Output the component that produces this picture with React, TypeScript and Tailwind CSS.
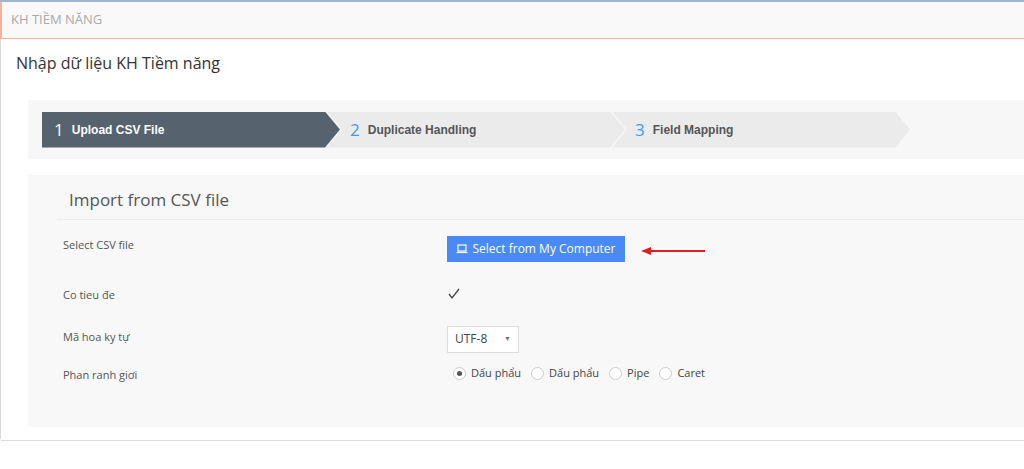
export default function App() {
  const f = { fontFamily: '"Open Sans", "Liberation Sans", sans-serif' }
  const steps = [
    { n: '1', label: 'Upload CSV File', active: true },
    { n: '2', label: 'Duplicate Handling', active: false },
    { n: '3', label: 'Field Mapping', active: false },
  ]
  return (
    <div className="w-[1024px] h-[469px] bg-white overflow-hidden border-t-2 border-[#9fb6cf]" style={f}>
      {/* Header */}
      <div className="h-[37px] bg-[#f9f9f9] border-l-2 border-[#f4b39a] border-b border-[#e6e6e6] flex items-center pl-[9px]">
        <span className="text-[13px] text-[#a9a9a9]">KH TIỀM NĂNG</span>
      </div>

      <div className="border-l border-[#d9d9d9] h-[400px]">
        <div className="pl-[15px] pt-[12px] text-[16px] text-[#333]">Nhập dữ liệu KH Tiềm năng</div>

        {/* Steps */}
        <div className="ml-[27px] mt-[25px] h-[59px] bg-[#f7f7f7] flex items-center pl-[14px]">
          {steps.map((s, i) => (
            <div
              key={s.n}
              className={
                'h-[36px] w-[298px] flex items-center ' +
                (i === 0 ? 'pl-[12px] ' : '-ml-[13px] pl-[23px] ') +
                (s.active ? 'bg-[#56636e] text-white ' : 'bg-[#ebebeb] text-[#555] ') +
                (i === 0
                  ? '[clip-path:polygon(0_0,calc(100%-15px)_0,100%_50%,calc(100%-15px)_100%,0_100%)]'
                  : '[clip-path:polygon(0_0,calc(100%-15px)_0,100%_50%,calc(100%-15px)_100%,0_100%,15px_50%)]')
              }
            >
              <span className={'text-[17px] mr-[8px] ' + (s.active ? 'text-white' : 'text-[#3b9cf0]')}>{s.n}</span>
              <span className="text-[12px] font-bold" style={{ fontFamily: '"Liberation Sans", Arial, sans-serif' }}>{s.label}</span>
            </div>
          ))}
        </div>

        {/* Panel */}
        <div className="ml-[27px] mt-[16px] h-[252px] bg-[#f8f8f8] pl-[29px]">
          <div className="pt-[12px] pb-[6px] pl-[12px] text-[17px] text-[#555] border-b border-[#ececec]">Import from CSV file</div>
          <div className="text-[11px] text-[#555]">
            <div className="flex h-[56px] pt-[17px]">
              <div className="w-[390px] pl-[6px]">Select CSV file</div>
              <button className="h-[26px] w-[178px] -mt-[1px] bg-[#4a8af4] text-white text-[12px] flex items-center justify-center gap-[4px]">
                <svg width="12" height="10" viewBox="0 0 12 10" fill="none" stroke="white" strokeWidth="1.2">
                  <rect x="2" y="1" width="8" height="6" />
                  <path d="M0.5 8.5h11" />
                </svg>
                Select from My Computer
              </button>
              <svg width="70" height="10" className="ml-[16px] mt-[9px]" viewBox="0 0 70 10">
                <path d="M8 5h56" stroke="#e02020" strokeWidth="2" />
                <path d="M0 5l10-4v8z" fill="#e02020" />
              </svg>
            </div>
            <div className="flex h-[42px] pt-[11px]">
              <div className="w-[390px] pl-[6px]">Co tieu đe</div>
              <svg width="14" height="12" viewBox="0 0 14 12" className="mt-[1px]">
                <path d="M2 6l3 4 7-9" stroke="#444" strokeWidth="1.3" fill="none" />
              </svg>
            </div>
            <div className="flex h-[48px] pt-[8px]">
              <div className="w-[390px] pl-[6px] pt-[3px]">Mã hoa ky tự</div>
              <div className="h-[27px] w-[72px] bg-white border border-[#ddd] flex items-center justify-between px-[7px] text-[12px] text-[#444]">
                UTF-8<span className="text-[7px] text-[#777]">▼</span>
              </div>
            </div>
            <div className="flex h-[30px] pt-[1px]">
              <div className="w-[390px] pl-[6px]">Phan ranh giơi</div>
              <div className="flex items-center gap-[4px] text-[11px] text-[#444] -mt-[1px] h-[16px]">
                {['Dấu phẩu', 'Dấu phẩu', 'Pipe', 'Caret'].map((t, i) => (
                  <label key={i} className="flex items-center gap-[5px] pl-[6px]">
                    <span className="w-[13px] h-[13px] rounded-full border border-[#ccc] bg-white flex items-center justify-center">
                      {i === 0 && <span className="w-[5px] h-[5px] rounded-full bg-[#555]" />}
                    </span>
                    {t}
                  </label>
                ))}
              </div>
            </div>
          </div>
        </div>
        <div className="mt-[13px] border-b border-[#ddd]" />
      </div>
    </div>
  )
}
